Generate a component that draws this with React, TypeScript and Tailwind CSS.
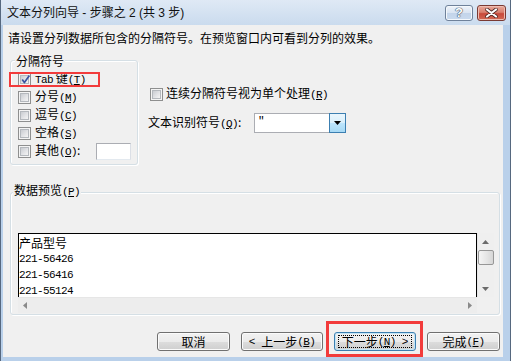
import React from "react";

function Acc({ k }: { k: string }) {
  return (
    <span className="font-['Liberation_Mono',monospace] text-[11px] tracking-[-0.6px]">
      (<span className="underline underline-offset-[1px]">{k}</span>)
    </span>
  );
}

function CheckBox({ checked }: { checked?: boolean }) {
  return (
    <span className="relative inline-flex h-[13px] w-[13px] shrink-0 border border-[#8e8f8f] bg-[#f4f4f4] p-[1px]">
      <span className="block h-full w-full border border-[#b4b8bd] bg-[linear-gradient(135deg,#c9ccd1_0%,#e2e3e6_55%,#f4f4f4_100%)]" />
      {checked && (
        <svg className="absolute left-[1px] top-[0px]" width="11" height="11" viewBox="0 0 11 11">
          <path d="M2.2 5.6 L4.4 8.6 L9.4 1.6" fill="none" stroke="#3a53a0" strokeWidth="1.7" strokeLinejoin="round" />
        </svg>
      )}
    </span>
  );
}

function Row({ label, k, checked, extra }: { label: React.ReactNode; k: string; checked?: boolean; extra?: React.ReactNode }) {
  return (
    <div className="flex h-[18px] items-center gap-[4px]">
      <CheckBox checked={checked} />
      <span className="text-[12px] leading-[16px] whitespace-nowrap">
        {label}
        <Acc k={k} />
        {extra}
      </span>
    </div>
  );
}

function UpArrow() {
  return (
    <svg width="7" height="4" viewBox="0 0 7 4">
      <path d="M0 4 L3.5 0 L7 4 Z" fill="#6b6b6b" />
    </svg>
  );
}
function DownArrow() {
  return (
    <svg width="7" height="4" viewBox="0 0 7 4">
      <path d="M0 0 L7 0 L3.5 4 Z" fill="#6b6b6b" />
    </svg>
  );
}
function LeftArrow() {
  return (
    <svg width="4" height="7" viewBox="0 0 4 7">
      <path d="M4 0 L4 7 L0 3.5 Z" fill="#8a8a8a" />
    </svg>
  );
}
function RightArrow() {
  return (
    <svg width="4" height="7" viewBox="0 0 4 7">
      <path d="M0 0 L0 7 L4 3.5 Z" fill="#8a8a8a" />
    </svg>
  );
}

function Btn({ w, children, def }: { w: string; children: React.ReactNode; def?: boolean }) {
  return (
    <div
      className={
        def
          ? "relative flex h-[19px] w-[82px] items-center justify-center rounded-[3px] border border-[#3c7fb1] bg-[linear-gradient(to_bottom,#f2f2f2_0%,#ebebeb_50%,#dddddd_50%,#cfcfcf_100%)] shadow-[inset_0_0_0_1px_#c4e5f6] text-[12px] leading-[16px]"
          : w === "73"
          ? "flex h-[19px] w-[73px] items-center justify-center rounded-[3px] border border-[#707070] bg-[linear-gradient(to_bottom,#f2f2f2_0%,#ebebeb_50%,#dddddd_50%,#cfcfcf_100%)] shadow-[inset_0_0_0_1px_#fbfbfb] text-[12px] leading-[16px]"
          : "flex h-[19px] w-[82px] items-center justify-center rounded-[3px] border border-[#707070] bg-[linear-gradient(to_bottom,#f2f2f2_0%,#ebebeb_50%,#dddddd_50%,#cfcfcf_100%)] shadow-[inset_0_0_0_1px_#fbfbfb] text-[12px] leading-[16px]"
      }
    >
      {def && <span className="absolute inset-x-[3px] inset-y-[2px] border border-dotted border-black" />}
      {children}
    </div>
  );
}

export default function App() {
  return (
    <div className="relative flex h-[361px] w-[511px] flex-col overflow-hidden border-x border-[#56687f] bg-[#b9d0ea] font-['Noto_Sans_CJK_SC',sans-serif] text-black">
      {/* Title bar */}
      <div className="flex h-[25px] shrink-0 items-start bg-[linear-gradient(to_bottom,#dfe9f5,#cadbee)] pl-[6px] pr-[4px]">
        <span className="mt-[5px] font-['Liberation_Sans','Noto_Sans_CJK_SC',sans-serif] text-[12px] leading-[16px] whitespace-nowrap text-[#111]">
          文本分列向导 - 步骤之 2 (共 3 步)
        </span>
        <div className="ml-auto mt-[5px] flex gap-[4px]">
          <div className="flex h-[16px] w-[28px] items-center justify-center rounded-[3px] border border-[#6f819a] bg-[linear-gradient(to_bottom,#eef3fa_0%,#d9e4f2_50%,#c3d4ea_50%,#c9daee_100%)] shadow-[inset_0_0_0_1px_#f4f8fc]">
            <span className="font-['Liberation_Sans',sans-serif] text-[13px] font-bold leading-[14px] text-white [text-shadow:0_0_1px_#3a4a60,0_0_1px_#3a4a60,0_0_1px_#3a4a60]">?</span>
          </div>
          <div className="flex h-[16px] w-[29px] items-center justify-center rounded-[3px] border border-[#7a3a33] bg-[linear-gradient(to_bottom,#e9a99b_0%,#d9806e_45%,#c8493a_55%,#d26a55_100%)] shadow-[inset_0_0_0_1px_#eebdb2]">
            <svg width="13" height="10" viewBox="0 0 13 10">
              <path d="M2 1.5 L11 8.5 M11 1.5 L2 8.5" stroke="#4a2420" strokeWidth="3.6" strokeLinecap="round" />
              <path d="M2 1.5 L11 8.5 M11 1.5 L2 8.5" stroke="#ffffff" strokeWidth="2.2" strokeLinecap="round" />
            </svg>
          </div>
        </div>
      </div>

      {/* Body */}
      <div className="flex flex-1 pl-[2px] pr-[7px] pb-[4px]">
        <div className="flex flex-1 flex-col bg-[#f0f0f0]">
          <div className="pl-[5px] pt-[5px] text-[12px] leading-[16px] whitespace-nowrap">
            请设置分列数据所包含的分隔符号。在预览窗口内可看到分列的效果。
          </div>

          <div className="mt-[14px] flex items-start">
            {/* Group 1 */}
            <div className="relative ml-[7px] w-[128px] rounded-[3px] border border-[#d5dfe5] pl-[7px] pt-[9px] pb-[4px] shadow-[inset_1px_1px_0_#ffffff,1px_1px_0_#ffffff]">
              <span className="absolute left-[4px] top-[-7px] bg-[#f0f0f0] px-[1px] text-[12px] leading-[14px]">分隔符号</span>
              <Row
                checked
                label={
                  <>
                    <span className="font-['Liberation_Mono',monospace] text-[11px] tracking-[-0.6px]">Tab</span> 键
                  </>
                }
                k="T"
              />
              <Row label="分号" k="M" />
              <Row label="逗号" k="C" />
              <Row label="空格" k="S" />
              <div className="flex h-[18px] items-center gap-[4px]">
                <CheckBox />
                <span className="text-[12px] leading-[16px] whitespace-nowrap">
                  其他<Acc k="O" />:
                </span>
                <div className="ml-[12px] h-[17px] w-[35px] border border-[#abadb3] border-b-[#e3e9ef] border-r-[#dbdfe6] bg-white" />
              </div>
            </div>

            {/* Right column */}
            <div className="ml-[10px] flex flex-col">
              <div className="mt-[26px] ml-[2px] flex h-[16px] items-center gap-[3px]">
                <CheckBox />
                <span className="text-[12px] leading-[16px] whitespace-nowrap">
                  连续分隔符号视为单个处理<Acc k="R" />
                </span>
              </div>
              <div className="mt-[11px] flex h-[20px] items-center">
                <span className="w-[106px] text-[12px] leading-[16px] whitespace-nowrap">
                  文本识别符号<Acc k="Q" />:
                </span>
                <div className="flex h-[20px] w-[92px] border border-[#abadb3] bg-white">
                  <span className="flex-1 pl-[3px] font-['Liberation_Mono',monospace] text-[11px] leading-[14px]">"</span>
                  <div className="flex w-[17px] items-center justify-center border border-[#3c7fb1] bg-[linear-gradient(to_bottom,#eaf6fd_0%,#d9f0fc_50%,#bee6fd_50%,#a7d9f5_100%)] -my-[1px] -mr-[1px]">
                    <svg width="7" height="4" viewBox="0 0 7 4">
                      <path d="M0 0 L7 0 L3.5 4 Z" fill="#000" />
                    </svg>
                  </div>
                </div>
              </div>
            </div>
          </div>

          {/* Group 2 */}
          <div className="relative ml-[7px] mt-[27px] w-[490px] rounded-[3px] border border-[#d5dfe5] pl-[7px] pt-[40px] pb-[1px] shadow-[inset_1px_1px_0_#ffffff,1px_1px_0_#ffffff]">
            <span className="absolute left-[2px] top-[-10px] bg-[#f0f0f0] px-[1px] text-[12px] leading-[14px] whitespace-nowrap">
              数据预览<Acc k="P" />
            </span>
            <div className="flex w-[476px] flex-col">
              <div className="flex h-[64px]">
                <div className="w-[459px] border-x border-t border-black bg-white pt-[1px]">
                  <div className="h-[16px] text-[12px] leading-[16px]">产品型号</div>
                  <div className="h-[16px] font-['Liberation_Mono',monospace] text-[11px] leading-[16px] tracking-[-0.6px]">221-56426</div>
                  <div className="h-[16px] font-['Liberation_Mono',monospace] text-[11px] leading-[16px] tracking-[-0.6px]">221-56416</div>
                  <div className="h-[16px] font-['Liberation_Mono',monospace] text-[11px] leading-[16px] tracking-[-0.6px]">221-55124</div>
                </div>
                <div className="flex w-[17px] flex-col items-center bg-[#efefef] shadow-[inset_1px_0_0_#e6e6e6]">
                  <div className="flex h-[17px] items-center justify-center">
                    <UpArrow />
                  </div>
                  <div className="h-[15px] w-[16px] rounded-[2px] border border-[#979797] bg-[linear-gradient(to_right,#f5f5f5,#e4e4e4_60%,#d6d6d6)]" />
                  <div className="flex-1" />
                  <div className="flex h-[17px] items-center justify-center">
                    <DownArrow />
                  </div>
                </div>
              </div>
              <div className="flex h-[16px]">
                <div className="flex w-[459px] items-center justify-between bg-[#ededed] px-[5px] shadow-[inset_0_1px_0_#e6e6e6]">
                  <LeftArrow />
                  <RightArrow />
                </div>
                <div className="w-[17px] bg-[#f0f0f0]" />
              </div>
            </div>
          </div>

          {/* Buttons */}
          <div className="mt-[17px] flex justify-end gap-[11px] pr-[3px]">
            <Btn w="73">取消</Btn>
            <Btn w="82">
              <span className="font-['Liberation_Mono',monospace] text-[11px]">&lt;</span>
              <span className="ml-[6px]">上一步</span>
              <Acc k="B" />
            </Btn>
            <Btn w="82" def>
              <span>下一步</span>
              <Acc k="N" />
              <span className="ml-[6px] font-['Liberation_Mono',monospace] text-[11px]">&gt;</span>
            </Btn>
            <Btn w="73">
              完成<Acc k="F" />
            </Btn>
          </div>
        </div>
      </div>

      {/* red annotation boxes */}
      <div className="pointer-events-none absolute left-[8px] top-[72px] h-[15px] w-[91px] border-2 border-[#f23b3b]" />
      <div className="pointer-events-none absolute left-[325px] top-[321px] h-[36px] w-[97px] border-[3px] border-[#f23b3b]" />
    </div>
  );
}
